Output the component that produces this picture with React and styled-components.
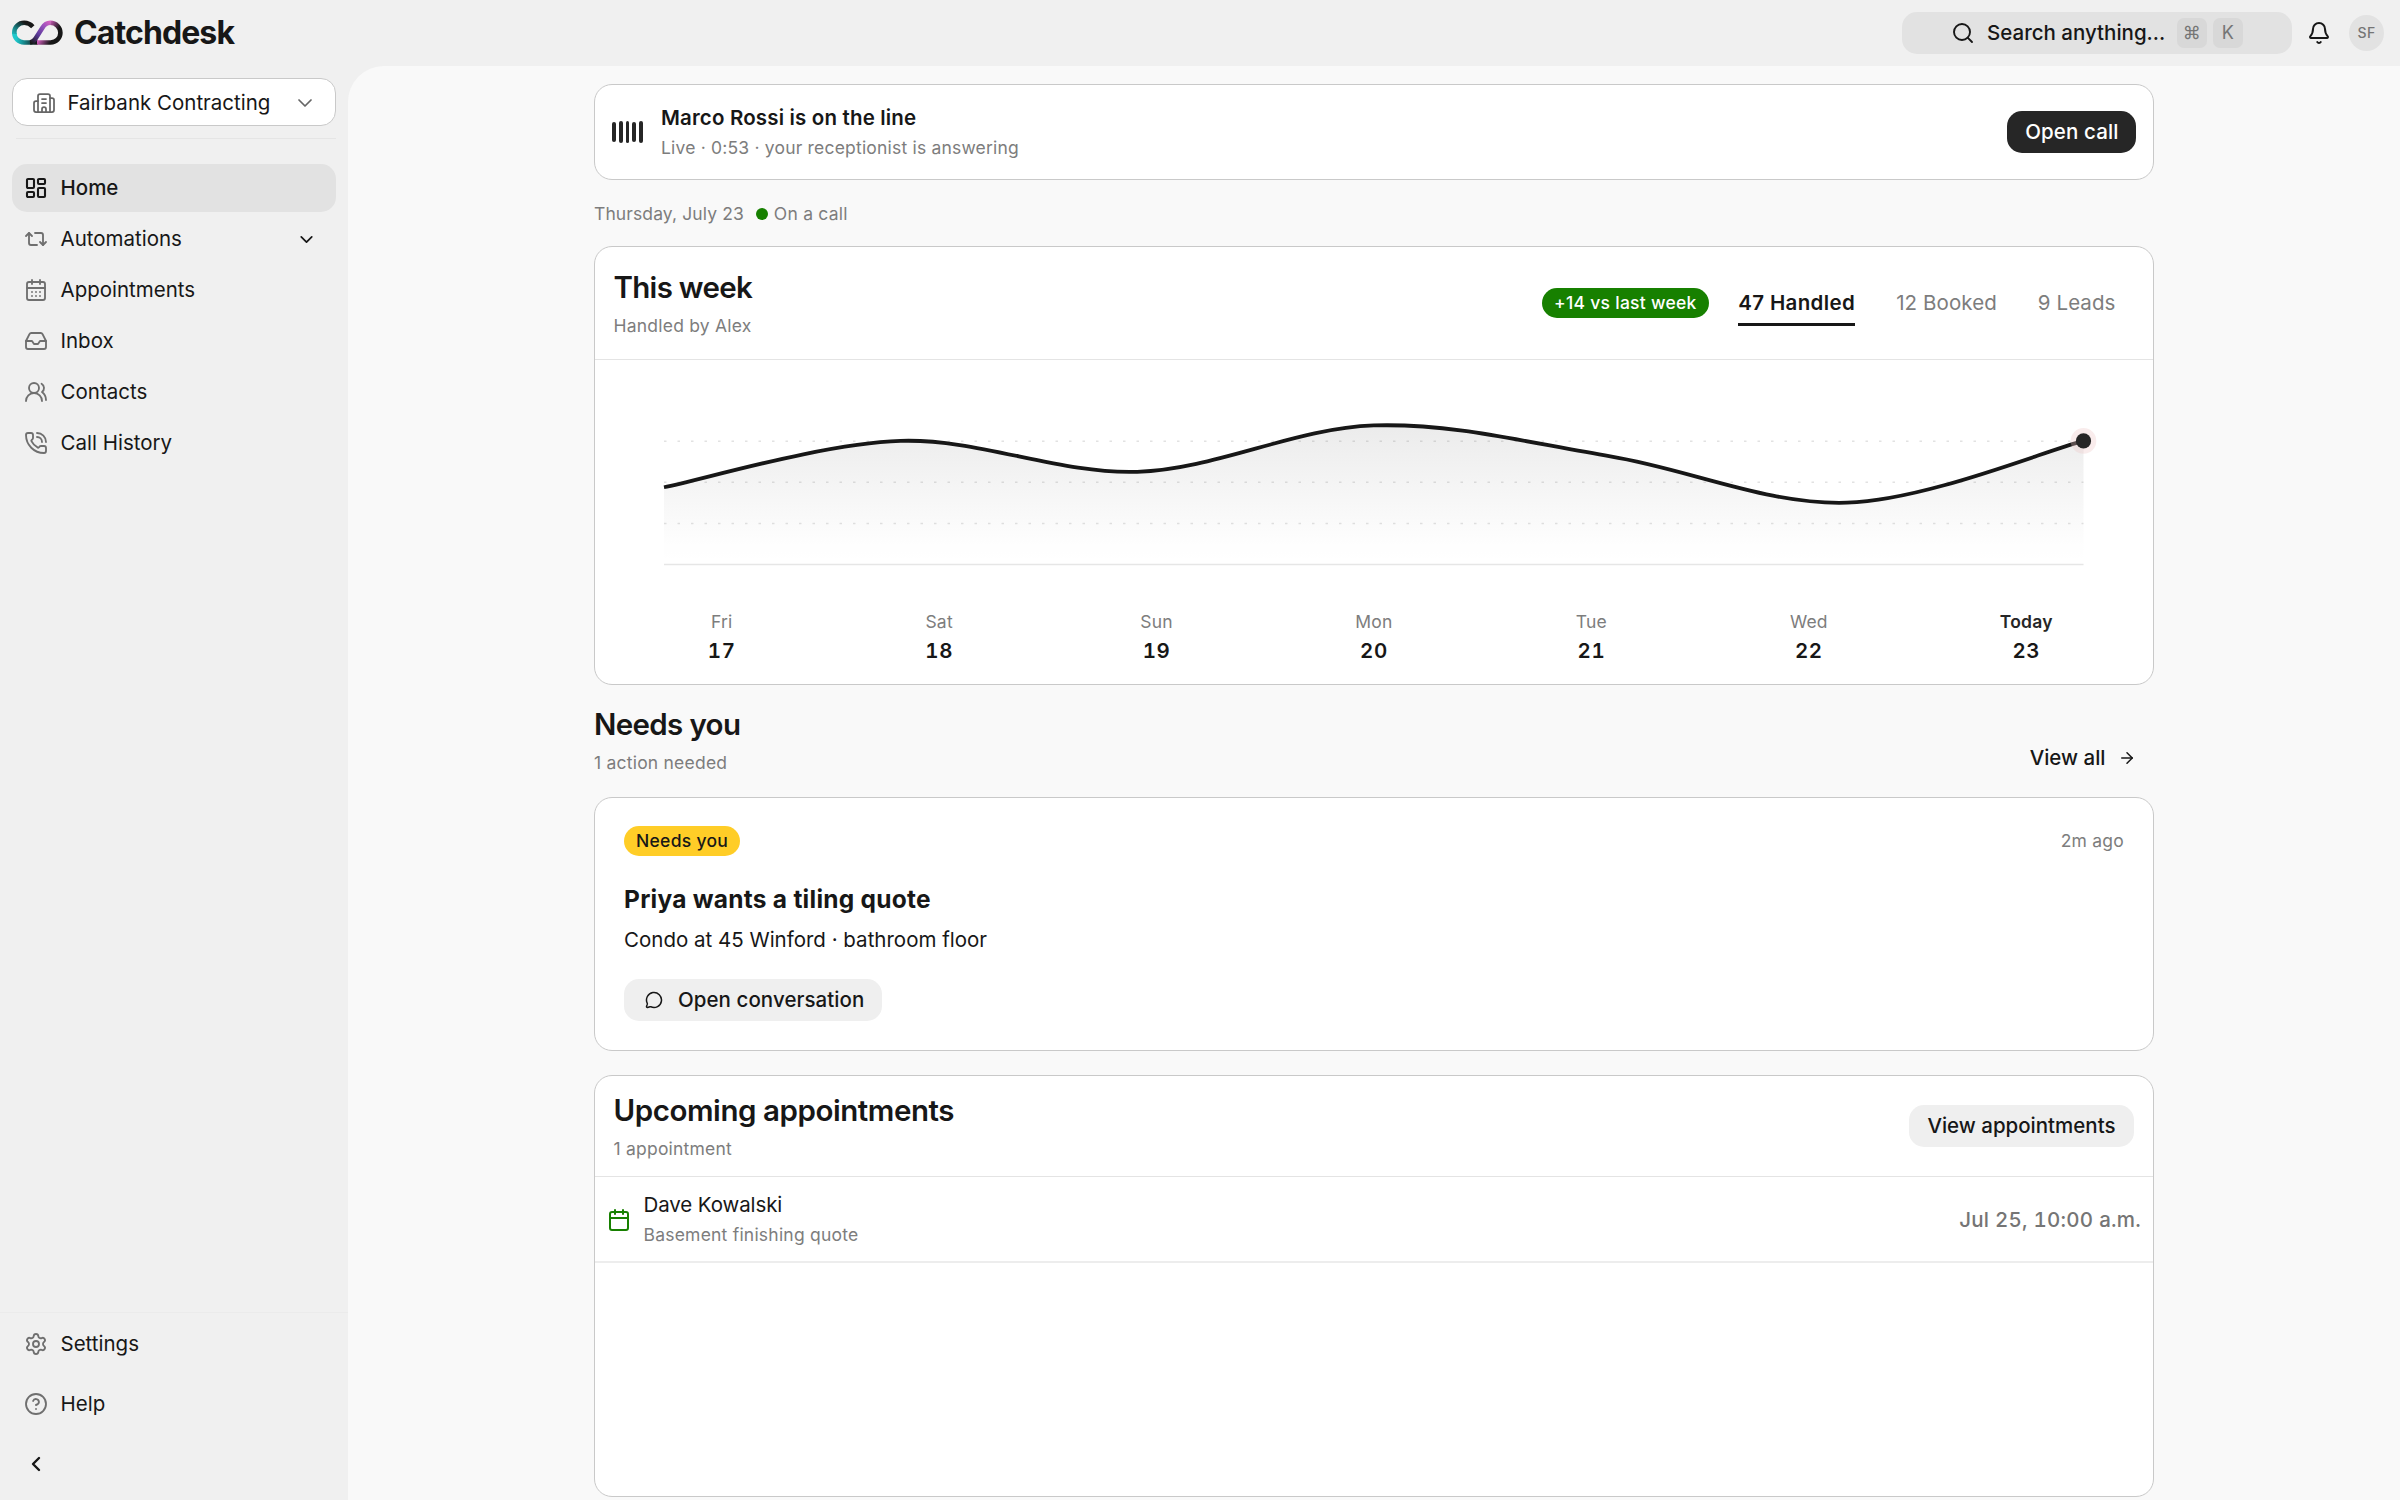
import React from "react";
import styled, { createGlobalStyle, css } from "styled-components";
import {
  ArrowRight,
  Bell,
  Building2,
  Calendar,
  CalendarDays,
  ChevronDown,
  ChevronLeft,
  CircleHelp,
  Inbox,
  LayoutDashboard,
  MessageCircle,
  PhoneCall,
  Repeat2,
  Search,
  Settings,
  UsersRound,
} from "lucide-react";

const color = {
  shell: "#f0f0f0",
  canvas: "#f9f9f9",
  surface: "#ffffff",
  ink: "#171717",
  button: "#262626",
  muted: "#7d7d7d",
  border: "#c9c9c9",
  divider: "#e4e4e4",
  active: "#e2e2e2",
  green: "#178000",
  yellow: "#ffcd27",
};

const GlobalStyle = createGlobalStyle`
  *, *::before, *::after { box-sizing: border-box; }
  body {
    margin: 0;
    background: ${color.shell};
    color: ${color.ink};
    font-family: Inter, "Liberation Sans", sans-serif;
    font-size: 20.5px;
    line-height: 30px;
    -webkit-font-smoothing: antialiased;
  }
  button { font: inherit; color: inherit; border: 0; background: none; padding: 0; }
  h1, h2, h3, p { margin: 0; }
  svg { display: block; flex-shrink: 0; }
`;

/* ---------- shell ---------- */

const Page = styled.div`
  display: grid;
  grid-template-columns: 348px 1fr;
  grid-template-rows: 66px 1fr;
  height: 1500px;
  overflow: hidden;
`;

const Header = styled.header`
  grid-column: 1 / -1;
  display: flex;
  align-items: center;
  justify-content: space-between;
  padding: 0 16px 0 12px;
`;

const Brand = styled.div`
  display: flex;
  align-items: center;
  gap: 11px;
`;

const Wordmark = styled.span`
  font-size: 32px;
  font-weight: 700;
  letter-spacing: -0.028em;
  line-height: 40px;
`;

const HeaderTools = styled.div`
  display: flex;
  align-items: center;
`;

const SearchBox = styled.button`
  display: flex;
  align-items: center;
  width: 390px;
  height: 42px;
  padding-left: 49px;
  border-radius: 15px;
  background: ${color.active};
  font-weight: 500;
`;

const SearchLabel = styled.span`
  margin: 0 11.5px 0 12.5px;
`;

const Key = styled.kbd`
  display: flex;
  align-items: center;
  justify-content: center;
  width: 30px;
  height: 30px;
  margin-right: 6px;
  border-radius: 7px;
  background: #d8d8d8;
  color: #757575;
  font: 400 18px/1 Inter, "Noto Sans", sans-serif;
`;

const BellSlot = styled.span`
  margin: 0 18.5px 0 15px;
`;

const Avatar = styled.div`
  display: flex;
  align-items: center;
  justify-content: center;
  width: 35px;
  height: 36px;
  border-radius: 50%;
  background: ${color.active};
  color: #757575;
  font-size: 14px;
  font-weight: 500;
  letter-spacing: 0.02em;
`;

/* ---------- sidebar ---------- */

const Sidebar = styled.aside`
  display: flex;
  flex-direction: column;
  justify-content: space-between;
  padding-top: 12px;
`;

const SidebarTop = styled.div`
  padding: 0 12px;
`;

const CompanySelect = styled.button`
  display: flex;
  align-items: center;
  width: 324px;
  height: 48px;
  padding: 1px 18px 0 19px;
  border: 1px solid ${color.border};
  border-radius: 15px;
  background: ${color.surface};
  color: #666;
`;

const CompanyName = styled.span`
  flex: 1;
  margin-left: 11.5px;
  text-align: left;
  color: ${color.ink};
`;

const Rule = styled.div`
  height: 1px;
  margin: 12px 0 25px 4px;
  background: #e5e5e5;
`;

const Nav = styled.nav`
  display: grid;
  gap: ${(p) => p.$gap}px;
`;

const NavItem = styled.a`
  display: flex;
  align-items: center;
  gap: 12.5px;
  height: 48px;
  padding: 0 19px 0 12px;
  border-radius: 15px;
  color: ${(p) => (p.$active ? color.ink : "#6f6f6f")};
  background: ${(p) => (p.$active ? color.active : "transparent")};
  font-weight: ${(p) => (p.$active ? 500 : 400)};
`;

const NavLabel = styled.span`
  flex: 1;
  color: ${color.ink};
`;

const SidebarFooter = styled.div`
  padding: 7px 12px 12px;
  border-top: 1px solid #ebebeb;
`;

/* ---------- main ---------- */

const Main = styled.main`
  display: flex;
  justify-content: center;
  padding-top: 18px;
  border-top-left-radius: 36px;
  background: ${color.canvas};
`;

const Column = styled.div`
  width: 1560px;
`;

const Card = styled.section`
  border: 1px solid ${color.border};
  border-radius: 18px;
  background: ${color.surface};
`;

const CallCard = styled(Card)`
  display: flex;
  align-items: center;
  height: 96px;
  padding: 0 17px;
`;

const Bars = styled.div`
  display: flex;
  align-items: center;
  gap: 3px;
`;

const Bar = styled.span`
  width: 3.8px;
  height: ${(p) => p.$height}px;
  border-radius: 2px;
  background: ${color.button};
`;

const Stack = styled.div`
  display: flex;
  flex-direction: column;
`;

const CallText = styled(Stack)`
  flex: 1;
  margin-left: 18px;
  padding-top: 1px;
`;

const Strong = styled.span`
  font-weight: 600;
  letter-spacing: 0.008em;
`;

const small = css`
  font-size: 17.5px;
  letter-spacing: 0.0125em;
`;

const Muted = styled.span`
  ${small}
  color: ${color.muted};
`;

const CallStatus = styled(Muted)`
  letter-spacing: 0.011em;
`;

const Button = styled.button`
  display: inline-flex;
  align-items: center;
  height: 42px;
  padding: 0 18px;
  border-radius: 15px;
  background: ${(p) => (p.$dark ? color.button : "#efefef")};
  color: ${(p) => (p.$dark ? "#fff" : color.ink)};
  font-weight: 500;
  letter-spacing: ${(p) => (p.$tracking || 0)}em;
`;

const OpenCall = styled(Button)`
  padding: 0 17.5px 0 18px;
`;

const StatusLine = styled.div`
  display: flex;
  align-items: center;
  height: 30px;
  margin: 18px 0;
  padding-top: 1px;
`;

const DateText = styled(Muted)`
  letter-spacing: 0.006em;
`;

const StatusDot = styled.i`
  width: 12px;
  height: 12px;
  margin: 0 6px 0 12px;
  border-radius: 50%;
  background: ${color.green};
`;

const Heading = styled.h2`
  font-size: 29.5px;
  font-weight: 600;
  line-height: 42px;
  letter-spacing: ${(p) => p.$tracking}em;
`;

const HeadingText = styled(Stack)`
  gap: 4px;
  & > ${Muted} { line-height: 28px; }
`;

const WeekHeader = styled.header`
  display: flex;
  align-items: center;
  justify-content: space-between;
  height: 113px;
  padding: 0 37.5px 0 18.5px;
  border-bottom: 1px solid ${color.divider};
`;

const WeekStats = styled.div`
  display: flex;
  align-items: center;
`;

const Pill = styled.span`
  display: inline-flex;
  align-items: center;
  height: 30px;
  padding: 0 12px;
  border-radius: 15px;
  background: ${(p) => (p.$warn ? color.yellow : color.green)};
  color: ${(p) => (p.$warn ? color.ink : "#fff")};
  ${small}
  font-weight: 500;
  letter-spacing: 0.016em;
`;

const Tab = styled.button`
  height: 46px;
  padding: 0;
  margin-left: ${(p) => (p.$active ? 29.5 : 41)}px;
  border-top: 3px solid transparent;
  border-bottom: 3px solid ${(p) => (p.$active ? color.ink : "transparent")};
  color: ${(p) => (p.$active ? color.ink : color.muted)};
  font-weight: ${(p) => (p.$active ? 600 : 400)};
  letter-spacing: ${(p) => (p.$active ? 0.018 : 0.004)}em;
`;

const Days = styled.div`
  display: grid;
  grid-template-columns: repeat(7, 1fr);
  padding: 0 18px 18px;
`;

const Day = styled.div`
  display: flex;
  flex-direction: column;
  align-items: center;
`;

const DayName = styled.span`
  ${small}
  line-height: 29px;
  color: ${(p) => (p.$today ? color.button : color.muted)};
  font-weight: ${(p) => (p.$today ? 600 : 400)};
`;

const DayNumber = styled.span`
  font-weight: 600;
  font-variant-numeric: tabular-nums;
  letter-spacing: 0.03em;
`;

const SectionHeader = styled.div`
  display: flex;
  align-items: flex-end;
  justify-content: space-between;
  height: 76px;
  margin: 18px 0 17.5px;
`;

const SectionTitle = styled(HeadingText)`
  height: 76px;
`;

const ViewAll = styled.button`
  display: flex;
  align-items: center;
  gap: 12.5px;
  height: 42px;
  padding-right: 18px;
  font-weight: 500;
`;

const TaskCard = styled(Card)`
  height: 254px;
  padding: 28.5px 29px 0;
`;

const TaskTop = styled.div`
  display: flex;
  align-items: center;
  justify-content: space-between;
`;

const TaskTitle = styled.h3`
  margin-top: 25px;
  font-size: 24.5px;
  font-weight: 700;
  line-height: 36px;
  letter-spacing: 0.0105em;
`;

const TaskText = styled.p`
  margin: 8px 0 23.5px;
`;

const ButtonIcon = styled.span`
  margin: 0 15px 0 3px;
`;

const UpcomingCard = styled(Card)`
  height: 422px;
  margin-top: 24.5px;
`;

const UpcomingHeader = styled.header`
  display: flex;
  align-items: center;
  justify-content: space-between;
  height: 101px;
  padding: 0 19px 0 18.5px;
  border-bottom: 1px solid ${color.divider};
`;

const ViewAppointments = styled(Button)`
  padding: 0 18.5px;
`;

const Appointment = styled.div`
  display: flex;
  align-items: center;
  height: 86px;
  padding: 1px 12px 0;
  border-bottom: 2px solid #ededed;
  color: ${color.green};
`;

const AppointmentText = styled(Stack)`
  flex: 1;
  margin-left: 12.5px;
  color: ${color.ink};
`;

const AppointmentName = styled.span`
  letter-spacing: -0.005em;
`;

const AppointmentTime = styled.time`
  color: #757575;
  font-weight: 500;
  font-variant-numeric: tabular-nums;
  letter-spacing: 0.012em;
`;

/* ---------- drawings ---------- */

function Logo() {
  return (
    <svg width="51" height="26" viewBox="0 0 51 26" fill="none" strokeWidth="4.6">
      <defs>
        <linearGradient id="loop" gradientUnits="userSpaceOnUse" x1="2" y1="17" x2="13" y2="3">
          <stop offset="0" stopColor="#20c9cc" />
          <stop offset="0.45" stopColor="#187d80" />
          <stop offset="1" stopColor="#171717" />
        </linearGradient>
        <linearGradient id="base" gradientUnits="userSpaceOnUse" x1="4" y1="20" x2="24" y2="22">
          <stop offset="0" stopColor="#20c9cc" />
          <stop offset="0.4" stopColor="#16888c" />
          <stop offset="1" stopColor="#171717" />
        </linearGradient>
        <linearGradient id="slash" gradientUnits="userSpaceOnUse" x1="19" y1="23" x2="38" y2="2">
          <stop offset="0" stopColor="#171717" />
          <stop offset="0.4" stopColor="#5d3b9c" />
          <stop offset="0.75" stopColor="#9a52bd" />
          <stop offset="1" stopColor="#d45fc0" />
        </linearGradient>
        <linearGradient id="bow" gradientUnits="userSpaceOnUse" x1="37" y1="2" x2="47" y2="8">
          <stop offset="0" stopColor="#d45fc0" />
          <stop offset="1" stopColor="#171717" />
        </linearGradient>
      </defs>
      <path d="M2.3 12.8C2.3 18.3 6.6 22.5 12 22.5H26" stroke="url(#base)" />
      <path d="M2.3 14V12.5C2.3 7 6.8 2.8 12.2 2.8c3.4 0 6.2 1.3 8.6 3.9" stroke="url(#loop)" />
      <path d="M18 22.5c3-.4 4.3-1.9 5.6-3.9L30.3 8c2-3.3 4.2-5.2 8-5.2" stroke="url(#slash)" />
      <path d="M25 22.5h13.6c5.5 0 9.8-4.3 9.8-9.7S44.1 2.8 38.2 2.8" stroke="url(#bow)" />
    </svg>
  );
}

const DAYS = [
  { name: "Fri", date: 17, handled: 5 },
  { name: "Sat", date: 18, handled: 8 },
  { name: "Sun", date: 19, handled: 6 },
  { name: "Mon", date: 20, handled: 9 },
  { name: "Tue", date: 21, handled: 7 },
  { name: "Wed", date: 22, handled: 4 },
  { name: "Today", date: 23, handled: 8, today: true },
];

const CHART = { width: 1558, height: 247, left: 69, right: 1488.5, base: 204.5, unit: 15.45 };

function WeekChart() {
  const { width, height, left, right, base, unit } = CHART;
  const step = (right - left) / (DAYS.length - 1);
  const pts = DAYS.map((d, i) => [left + i * step, base - d.handled * unit]);
  const at = (i) => pts[Math.max(0, Math.min(pts.length - 1, i))];
  let line = `M${pts[0]}`;
  for (let i = 0; i < pts.length - 1; i++) {
    const [a, b, c, d] = [at(i - 1), at(i), at(i + 1), at(i + 2)];
    line += `C${b[0] + (c[0] - a[0]) / 6} ${b[1] + (c[1] - a[1]) / 6} ${c[0] - (d[0] - b[0]) / 6} ${c[1] - (d[1] - b[1]) / 6} ${c[0]} ${c[1]}`;
  }
  const end = pts[pts.length - 1];
  return (
    <svg width={width} height={height} viewBox={`0 0 ${width} ${height}`} fill="none">
      <defs>
        <linearGradient id="area" gradientUnits="userSpaceOnUse" x1="0" y1="65" x2="0" y2={base}>
          <stop offset="0" stopColor="#171717" stopOpacity="0.085" />
          <stop offset="0.85" stopColor="#171717" stopOpacity="0.006" />
          <stop offset="1" stopColor="#171717" stopOpacity="0" />
        </linearGradient>
      </defs>
      {[81.2, 122.3, 163.4].map((y) => (
        <line key={y} x1={left} x2={right} y1={y} y2={y} stroke="#e2e2e2" strokeWidth="1.5" strokeDasharray="2.5 11" />
      ))}
      <line x1={left} x2={right} y1={base} y2={base} stroke="#e6e6e6" strokeWidth="1.5" />
      <path d={`${line}V${base}H${left}Z`} fill="url(#area)" />
      <path d={line} stroke="#171717" strokeWidth="3.8" />
      <circle cx={end[0]} cy={end[1]} r="12.8" fill="#ecc4c4" fillOpacity="0.32" />
      <circle cx={end[0]} cy={end[1]} r="7.6" fill={color.button} />
    </svg>
  );
}

/* ---------- page ---------- */

const NAV = [
  { label: "Home", icon: LayoutDashboard, active: true },
  { label: "Automations", icon: Repeat2, expandable: true },
  { label: "Appointments", icon: CalendarDays },
  { label: "Inbox", icon: Inbox },
  { label: "Contacts", icon: UsersRound },
  { label: "Call History", icon: PhoneCall },
];

const FOOTER_NAV = [
  { label: "Settings", icon: Settings },
  { label: "Help", icon: CircleHelp },
];

export default function App() {
  return (
    <>
      <GlobalStyle />
      <Page>
        <Header>
          <Brand>
            <Logo />
            <Wordmark>Catchdesk</Wordmark>
          </Brand>
          <HeaderTools>
            <SearchBox>
              <Search size={24} strokeWidth={1.9} />
              <SearchLabel>Search anything...</SearchLabel>
              <Key>⌘</Key>
              <Key>K</Key>
            </SearchBox>
            <BellSlot>
              <Bell size={24} strokeWidth={2} />
            </BellSlot>
            <Avatar>SF</Avatar>
          </HeaderTools>
        </Header>

        <Sidebar>
          <SidebarTop>
            <CompanySelect>
              <Building2 size={24} strokeWidth={1.75} />
              <CompanyName>Fairbank Contracting</CompanyName>
              <ChevronDown size={24} strokeWidth={1.75} />
            </CompanySelect>
            <Rule />
            <Nav $gap={3}>
              {NAV.map(({ label, icon: Icon, active, expandable }) => (
                <NavItem key={label} $active={active}>
                  <Icon size={24} strokeWidth={active ? 2.1 : 1.85} />
                  <NavLabel>{label}</NavLabel>
                  {expandable && <ChevronDown size={21} strokeWidth={2} color={color.ink} />}
                </NavItem>
              ))}
            </Nav>
          </SidebarTop>
          <SidebarFooter>
            <Nav $gap={12}>
              {FOOTER_NAV.map(({ label, icon: Icon }) => (
                <NavItem key={label}>
                  <Icon size={24} strokeWidth={1.85} />
                  <NavLabel>{label}</NavLabel>
                </NavItem>
              ))}
              <NavItem>
                <ChevronLeft size={24} strokeWidth={2.4} color={color.ink} />
              </NavItem>
            </Nav>
          </SidebarFooter>
        </Sidebar>

        <Main>
          <Column>
            <CallCard>
              <Bars>
                {[20, 22.5, 22.5, 20, 22.5].map((h, i) => (
                  <Bar key={i} $height={h} />
                ))}
              </Bars>
              <CallText>
                <Strong>Marco Rossi is on the line</Strong>
                <CallStatus>Live · 0:53 · your receptionist is answering</CallStatus>
              </CallText>
              <OpenCall $dark $tracking={0.006}>Open call</OpenCall>
            </CallCard>

            <StatusLine>
              <DateText>Thursday, July 23</DateText>
              <StatusDot />
              <Muted>On a call</Muted>
            </StatusLine>

            <Card>
              <WeekHeader>
                <HeadingText>
                  <Heading $tracking={-0.024}>This week</Heading>
                  <Muted>Handled by Alex</Muted>
                </HeadingText>
                <WeekStats>
                  <Pill>+14 vs last week</Pill>
                  <Tab $active>47 Handled</Tab>
                  <Tab>12 Booked</Tab>
                  <Tab>9 Leads</Tab>
                </WeekStats>
              </WeekHeader>
              <WeekChart />
              <Days>
                {DAYS.map((d) => (
                  <Day key={d.date}>
                    <DayName $today={d.today}>{d.name}</DayName>
                    <DayNumber>{d.date}</DayNumber>
                  </Day>
                ))}
              </Days>
            </Card>

            <SectionHeader>
              <SectionTitle>
                <Heading $tracking={-0.022}>Needs you</Heading>
                <Muted>1 action needed</Muted>
              </SectionTitle>
              <ViewAll>
                View all
                <ArrowRight size={18} strokeWidth={2} />
              </ViewAll>
            </SectionHeader>

            <TaskCard>
              <TaskTop>
                <Pill $warn>Needs you</Pill>
                <Muted>2m ago</Muted>
              </TaskTop>
              <TaskTitle>Priya wants a tiling quote</TaskTitle>
              <TaskText>Condo at 45 Winford · bathroom floor</TaskText>
              <Button $tracking={0.003}>
                <ButtonIcon>
                  <MessageCircle size={18} strokeWidth={2} />
                </ButtonIcon>
                Open conversation
              </Button>
            </TaskCard>

            <UpcomingCard>
              <UpcomingHeader>
                <HeadingText>
                  <Heading $tracking={-0.015}>Upcoming appointments</Heading>
                  <Muted>1 appointment</Muted>
                </HeadingText>
                <ViewAppointments>View appointments</ViewAppointments>
              </UpcomingHeader>
              <Appointment>
                <Calendar size={24} strokeWidth={2} />
                <AppointmentText>
                  <AppointmentName>Dave Kowalski</AppointmentName>
                  <Muted>Basement finishing quote</Muted>
                </AppointmentText>
                <AppointmentTime>Jul 25, 10:00 a.m.</AppointmentTime>
              </Appointment>
            </UpcomingCard>
          </Column>
        </Main>
      </Page>
    </>
  );
}
